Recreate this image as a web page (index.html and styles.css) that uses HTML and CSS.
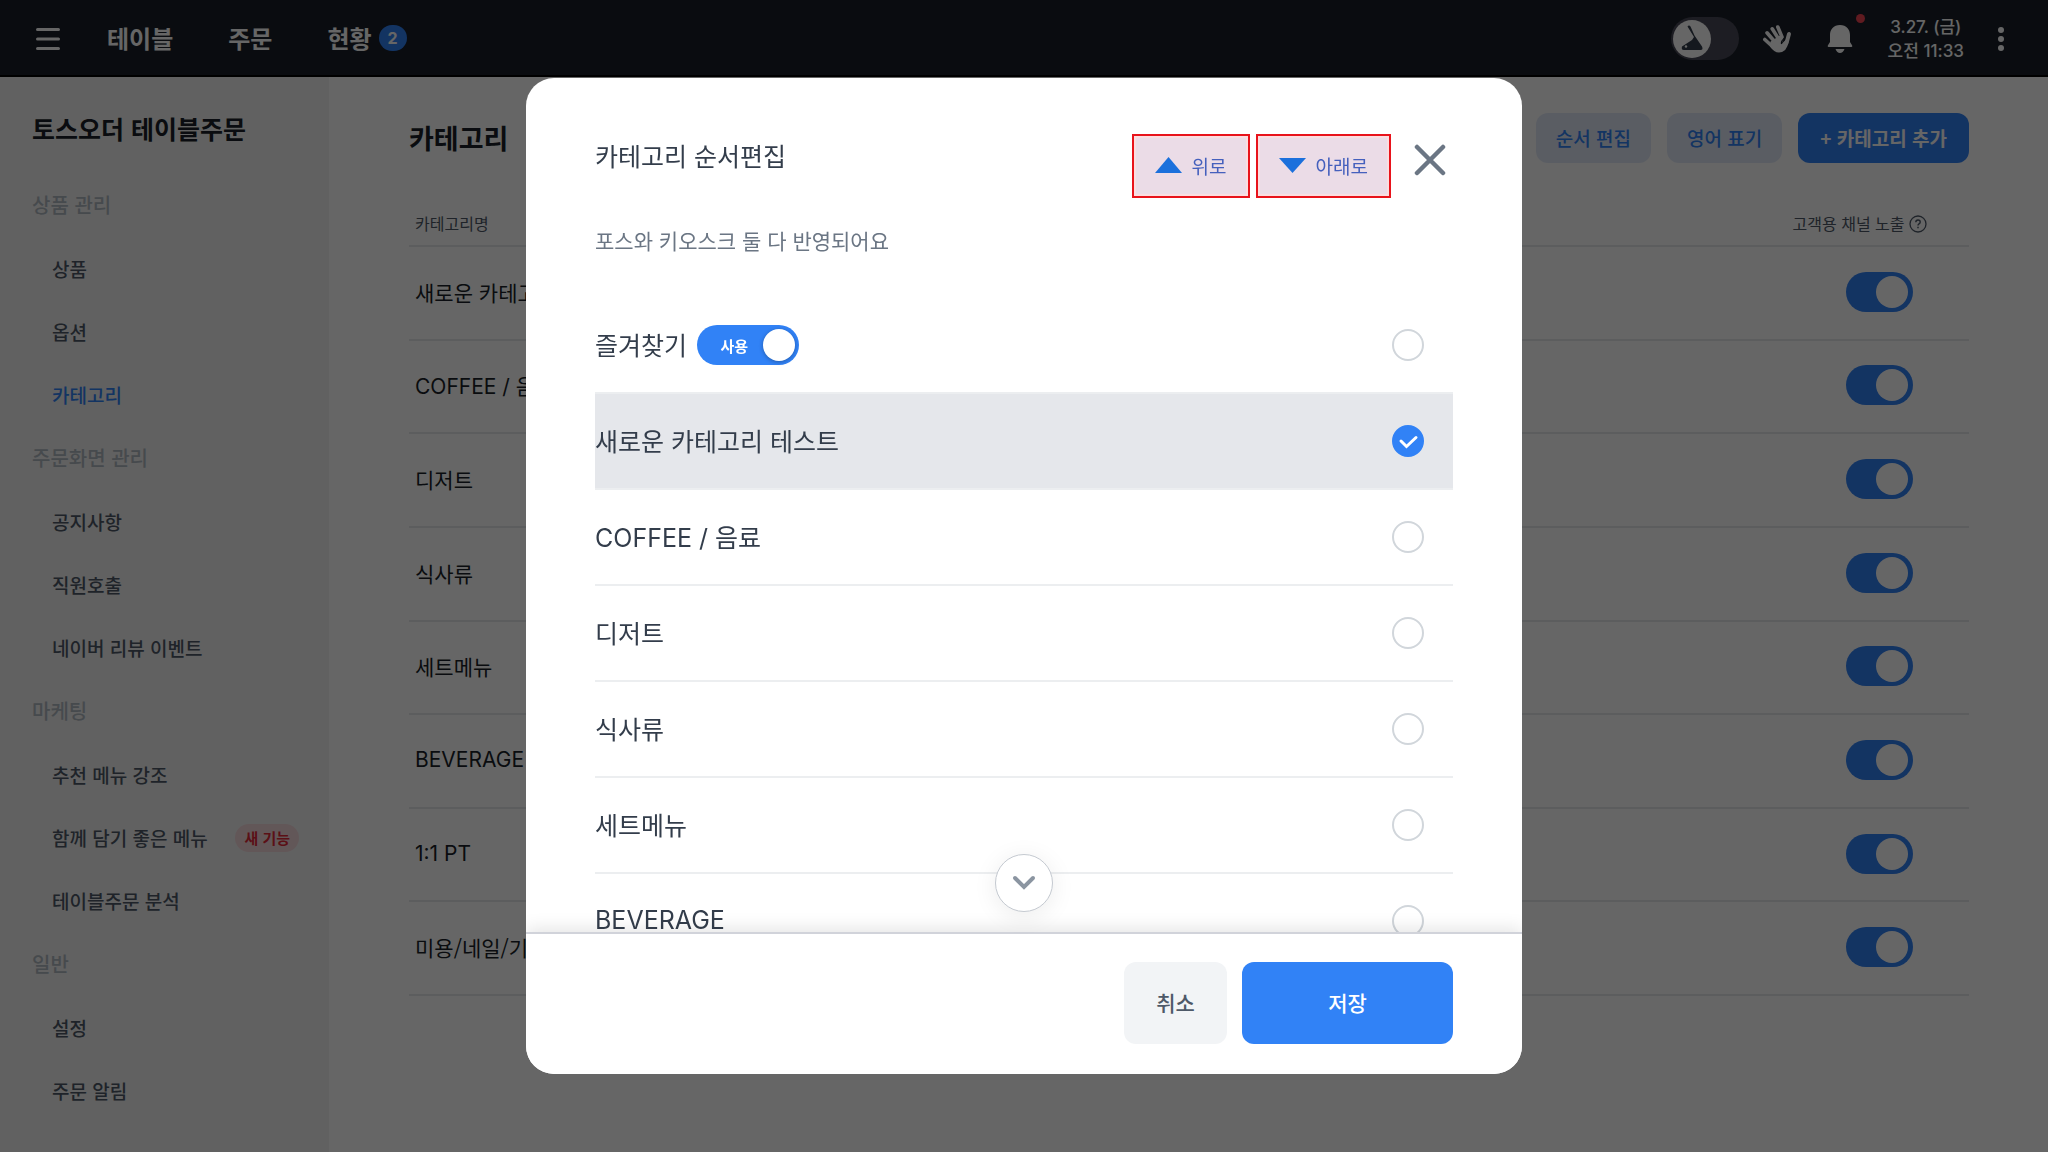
FILE: index.html
```
<!DOCTYPE html>
<html lang="ko">

<head>
    <meta charset="UTF-8">
    <meta name="viewport" content="width=device-width, initial-scale=1.0">
    <title>카테고리 - 토스오더 테이블주문</title>
    <link rel="stylesheet" href="styles.css">
</head>

<body>
    <header class="topbar">
        <button type="button" class="icon-btn menu-btn" aria-label="메뉴">
            <svg width="24" height="24" viewBox="0 0 24 24"><path d="M1.5 2.5h21M1.5 12h21M1.5 21.5h21" stroke="#fff" stroke-width="3" stroke-linecap="round"/></svg>
        </button>
        <nav class="top-nav">
            <a href="#">테이블</a>
            <a href="#">주문</a>
            <a href="#">현황 <span class="count latin">2</span></a>
        </nav>
        <div class="top-tools">
            <button type="button" class="mode-switch" aria-label="모드 전환">
                <span class="mode-knob">
                    <svg width="38" height="38" viewBox="0 0 38 38"><path d="M14.500 6.500q1.500-2 3 0l4 9 7.500 11q1.500 3.500-1.500 3.500H11q-3 0-2-3.500l10-6.500 2-3z" fill="#333d4b"/><circle cx="13" cy="26.500" r="1.200" fill="#fff"/></svg>
                </span>
            </button>
            <button type="button" class="icon-btn hand-btn" aria-label="직원호출">
                <svg width="30" height="30" viewBox="0 0 30 30"><g stroke="#fff" stroke-linecap="round" fill="none" stroke-width="3.600"><path d="M2.800 15.500L11 23M5 8.800L13 18M10.200 4.800L17 15.500M15.800 3L20 13"/><path d="M27 10L24.500 19" stroke-width="4"/></g><path d="M8.500 17.500L19 11l2.500 4.500-2.500 5 6.500-6.500 1 4q-1.500 10-9.500 10.500-5 0-9-6z" fill="#fff"/><path d="M19.500 20q-.5-4 3.500-5.500" stroke="#191f28" stroke-width="1.300" fill="none"/></svg>
            </button>
            <button type="button" class="icon-btn bell-btn" aria-label="알림">
                <svg width="26" height="30" viewBox="0 0 26 30"><path d="M13 1C6.500 1 3 5.500 3 11v7L.8 21.500q-.5 1.500 1 1.500h22.400q1.500 0 1-1.500L23 18v-7C23 5.500 19.500 1 13 1zM8.500 25h9q-1.500 4-4.500 4t-4.500-4z" fill="#fff"/></svg>
                <span class="dot"></span>
            </button>
            <div class="clock latin">3.27. (금)<br>오전 11:33</div>
            <button type="button" class="icon-btn more-btn" aria-label="더보기">
                <svg width="6" height="24" viewBox="0 0 6 24" fill="#fff"><circle cx="3" cy="3" r="3"/><circle cx="3" cy="12" r="3"/><circle cx="3" cy="21" r="3"/></svg>
            </button>
        </div>
    </header>

    <div class="page">
        <aside class="sidebar">
            <h2>토스오더 테이블주문</h2>
            <h3>상품 관리</h3>
            <a href="#">상품</a>
            <a href="#">옵션</a>
            <a href="#" class="active">카테고리</a>
            <h3>주문화면 관리</h3>
            <a href="#">공지사항</a>
            <a href="#">직원호출</a>
            <a href="#">네이버 리뷰 이벤트</a>
            <h3>마케팅</h3>
            <a href="#">추천 메뉴 강조</a>
            <a href="#">함께 담기 좋은 메뉴 <span class="new">새 기능</span></a>
            <a href="#">테이블주문 분석</a>
            <h3>일반</h3>
            <a href="#">설정</a>
            <a href="#">주문 알림</a>
        </aside>

        <main class="content">
            <div class="content-head">
                <h1>카테고리</h1>
                <button type="button" class="btn-soft">순서 편집</button>
                <button type="button" class="btn-soft">영어 표기</button>
                <button type="button" class="btn-add">+ 카테고리 추가</button>
            </div>
            <table class="category-table">
                <thead>
                    <tr>
                        <th>카테고리명</th>
                        <th class="channel">고객용 채널 노출 <svg class="help" width="18" height="18" viewBox="0 0 18 18" fill="none" stroke="#4e5968"><circle cx="9" cy="9" r="8" stroke-width="1.300"/><path d="M6.800 7.200q0-2.200 2.200-2.200t2.200 2q0 1.200-1.200 1.900-1 .6-1 1.600" stroke-width="1.400"/><path d="M9 11.800v1.500" stroke-width="1.500"/></svg></th>
                    </tr>
                </thead>
                <tbody>
                    <tr><td>새로운 카테고리 테스트</td><td><input type="checkbox" class="switch" aria-label="새로운 카테고리 테스트 노출" checked></td></tr>
                    <tr><td class="latin">COFFEE / 음료</td><td><input type="checkbox" class="switch" aria-label="COFFEE / 음료 노출" checked></td></tr>
                    <tr><td>디저트</td><td><input type="checkbox" class="switch" aria-label="디저트 노출" checked></td></tr>
                    <tr><td>식사류</td><td><input type="checkbox" class="switch" aria-label="식사류 노출" checked></td></tr>
                    <tr><td>세트메뉴</td><td><input type="checkbox" class="switch" aria-label="세트메뉴 노출" checked></td></tr>
                    <tr><td class="latin">BEVERAGE</td><td><input type="checkbox" class="switch" aria-label="BEVERAGE 노출" checked></td></tr>
                    <tr><td class="latin">1:1 PT</td><td><input type="checkbox" class="switch" aria-label="1:1 PT 노출" checked></td></tr>
                    <tr><td>미용/네일/기타</td><td><input type="checkbox" class="switch" aria-label="미용/네일/기타 노출" checked></td></tr>
                </tbody>
            </table>
        </main>
    </div>

    <div class="overlay">
        <div class="modal" role="dialog" aria-labelledby="modalTitle">
            <div class="modal-head">
                <h2 id="modalTitle">카테고리 순서편집</h2>
                <button type="button" class="move-btn">
                    <svg width="27" height="16" viewBox="0 0 27 16"><path d="M13.500 0L27 16H0z" fill="#1b70dc"/></svg>
                    위로
                </button>
                <button type="button" class="move-btn">
                    <svg width="27" height="16" viewBox="0 0 27 16"><path d="M13.500 16L27 1H0z" fill="#1b70dc"/></svg>
                    아래로
                </button>
                <button type="button" class="close-btn" aria-label="닫기">
                    <svg width="32" height="32" viewBox="0 0 32 32"><path d="M3 3l26 26M29 3L3 29" stroke="#6b7684" stroke-width="4.500" stroke-linecap="round"/></svg>
                </button>
            </div>
            <p class="modal-desc">포스와 키오스크 둘 다 반영되어요</p>

            <div class="order-list">
                <div class="order-row">
                    <label for="cat0">즐겨찾기</label>
                    <label class="use-switch"><input type="checkbox" checked><span>사용</span></label>
                    <input type="radio" name="cat" id="cat0">
                </div>
                <div class="order-row selected">
                    <label for="cat1">새로운 카테고리 테스트</label>
                    <input type="radio" name="cat" id="cat1" checked>
                </div>
                <div class="order-row latin">
                    <label for="cat2">COFFEE / 음료</label>
                    <input type="radio" name="cat" id="cat2">
                </div>
                <div class="order-row">
                    <label for="cat3">디저트</label>
                    <input type="radio" name="cat" id="cat3">
                </div>
                <div class="order-row">
                    <label for="cat4">식사류</label>
                    <input type="radio" name="cat" id="cat4">
                </div>
                <div class="order-row">
                    <label for="cat5">세트메뉴</label>
                    <input type="radio" name="cat" id="cat5">
                </div>
                <div class="order-row latin">
                    <label for="cat6">BEVERAGE</label>
                    <input type="radio" name="cat" id="cat6">
                </div>
            </div>

            <div class="modal-foot">
                <button type="button" class="scroll-btn" aria-label="아래로 스크롤">
                    <svg width="24" height="16" viewBox="0 0 24 16"><path d="M3 3l9 9 9-9" fill="none" stroke="#8b95a1" stroke-width="4" stroke-linecap="round"/></svg>
                </button>
                <button type="button" class="btn-cancel">취소</button>
                <button type="button" class="btn-save">저장</button>
            </div>
        </div>
    </div>
</body>

</html>
```
FILE: styles.css
```
* {
    box-sizing: border-box;
}

body {
    margin: 0;
    font-family: "Noto Sans CJK KR", sans-serif;
    color: #191f28;
    background-color: #fff;
    height: 100vh;
    overflow: hidden;
    display: flex;
    flex-direction: column;
}

h1, h2, h3, p {
    margin: 0;
}

a {
    color: inherit;
    text-decoration: none;
}

button {
    font-family: inherit;
    border: none;
    padding: 0;
    cursor: pointer;
}

svg {
    display: block;
}

.latin {
    font-family: Inter, "Noto Sans CJK KR", sans-serif;
}

/* top bar */
.topbar {
    display: flex;
    align-items: center;
    height: 77px;
    padding: 0 44px 0 36px;
    background-color: #191f28;
    box-shadow: inset 0 -2px 0 #000;
    color: #fff;
}

.icon-btn {
    background: none;
    position: relative;
}

.top-nav {
    display: flex;
    gap: 55px;
    margin-left: 47px;
    padding-bottom: 2px;
    font-size: 24px;
    font-weight: 700;
}

.top-nav a {
    display: flex;
    align-items: center;
    gap: 7px;
    line-height: 34px;
}

.count {
    width: 28px;
    height: 26px;
    border-radius: 13px;
    background-color: #3182f6;
    font-size: 16px;
    font-weight: 700;
    line-height: 26px;
    text-align: center;
}

.top-tools {
    display: flex;
    align-items: center;
    margin-left: auto;
}

.mode-switch {
    width: 68px;
    height: 43px;
    padding: 2px;
    border-radius: 22px;
    background-color: #4a4a58;
}

.mode-knob {
    display: block;
    width: 38px;
    height: 38px;
    border-radius: 50%;
    background-color: #fff;
}

.hand-btn {
    margin-left: 23px;
}

.bell-btn {
    margin-left: 35px;
}

.dot {
    position: absolute;
    top: -10px;
    right: -12px;
    width: 9px;
    height: 9px;
    border-radius: 50%;
    background-color: #f04452;
}

.clock {
    margin: 0 34px 0 35px;
    font-size: 17px;
    font-weight: 500;
    line-height: 24px;
    text-align: center;
}

/* sidebar */
.page {
    display: flex;
    flex: 1;
}

.sidebar {
    flex: none;
    width: 329px;
    padding: 28px 30px 28px 32px;
    background-color: #f3f3f3;
}

.sidebar h2 {
    height: 68px;
    font-size: 25px;
    font-weight: 700;
    line-height: 46px;
    white-space: nowrap;
}

.sidebar h3 {
    font-size: 20px;
    font-weight: 500;
    line-height: 64px;
    color: #b0b8c1;
}

.sidebar a {
    display: flex;
    align-items: center;
    justify-content: space-between;
    height: 63px;
    padding-left: 20px;
    font-size: 19px;
    font-weight: 500;
    color: #4e5968;
    white-space: nowrap;
}

.sidebar .active {
    color: #3182f6;
}

.new {
    padding: 0 9px;
    border-radius: 14px;
    background-color: #f5d9dc;
    color: #e42939;
    font-size: 15px;
    font-weight: 700;
    line-height: 28px;
}

/* category table */
.content {
    flex: 1;
    padding: 36px 79px 0 80px;
}

.content-head {
    display: flex;
    align-items: center;
    gap: 16px;
}

.content-head h1 {
    margin-right: auto;
    font-size: 27px;
    font-weight: 700;
    line-height: 50px;
}

.btn-soft,
.btn-add {
    height: 50px;
    padding: 0 20px 2px;
    border-radius: 12px;
    font-size: 19px;
    font-weight: 500;
}

.btn-soft {
    background-color: #e2e9f8;
    color: #3182f6;
}

.btn-add {
    padding: 0 22px 2px;
    background-color: #3182f6;
    color: #fff;
    font-weight: 700;
}

.category-table {
    width: 100%;
    height: 794px;
    margin-top: 39px;
    border-collapse: collapse;
}

.category-table th {
    height: 44px;
    padding: 0 6px 2px;
    border-bottom: 2px solid #e5e8eb;
    font-size: 16px;
    font-weight: 400;
    color: #4e5968;
    text-align: left;
}

.category-table .channel {
    padding-right: 42px;
    text-align: right;
}

.help {
    display: inline-block;
    vertical-align: -3px;
}

.category-table td {
    padding: 0 6px 2px;
    border-bottom: 2px solid #e5e8eb;
    font-size: 21px;
}

.category-table td:last-child {
    padding-right: 56px;
    text-align: right;
}

.switch {
    appearance: none;
    display: inline-block;
    width: 67px;
    height: 40px;
    margin: 0;
    padding: 4px 5px;
    border-radius: 20px;
    background-color: #b0b8c1;
    vertical-align: middle;
}

.switch::before {
    content: "";
    display: block;
    width: 32px;
    height: 32px;
    border-radius: 50%;
    background-color: #fff;
}

.switch:checked {
    background-color: #3182f6;
}

.switch:checked::before {
    margin-left: auto;
}

/* modal */
.overlay {
    position: fixed;
    inset: 0;
    display: flex;
    align-items: center;
    justify-content: center;
    background-color: rgba(0, 0, 0, 0.6);
}

.modal {
    display: flex;
    flex-direction: column;
    width: 996px;
    max-width: 100%;
    height: calc(100vh - 156px);
    border-radius: 28px;
    background-color: #fff;
    overflow: hidden;
}

.modal-head {
    display: flex;
    align-items: flex-start;
    gap: 6px;
    padding: 56px 69px 0;
}

.modal-head h2 {
    margin-right: auto;
    font-size: 25px;
    font-weight: 400;
    line-height: 42px;
    color: #333d4b;
}

.move-btn {
    display: flex;
    align-items: center;
    gap: 10px;
    height: 64px;
    padding: 0 21px 2px;
    border: 2px solid #e8131b;
    background-color: #ebdce7;
    box-shadow: inset 0 0 0 2px #fbdde0;
    color: #4560bd;
    font-size: 19px;
}

.close-btn {
    margin-left: 10px;
    padding: 10px 7px;
    background: none;
}

.modal-desc {
    padding: 22px 69px 38px;
    font-size: 21px;
    line-height: 40px;
    color: #6b7684;
}

.order-list {
    flex: 1;
    min-height: 0;
    overflow: hidden;
    padding: 0 69px;
}

.order-row {
    display: flex;
    align-items: center;
    height: 96px;
    padding-right: 29px;
    border-bottom: 2px solid #eceef0;
    font-size: 25px;
    color: #333d4b;
}

.order-row > label {
    padding-bottom: 2px;
}

.order-row.selected {
    background-color: #e5e7eb;
}

.order-row input[type="radio"] {
    appearance: none;
    width: 32px;
    height: 32px;
    margin: 0 0 0 auto;
    border: 2px solid #d1d6db;
    border-radius: 50%;
    background-color: #fff;
}

.order-row input[type="radio"]:checked {
    border-color: #3182f6;
    background: #3182f6 url("data:image/svg+xml,%3Csvg xmlns='http://www.w3.org/2000/svg' viewBox='0 0 28 28'%3E%3Cpath d='M7 14l5.500 5.500L22 10.500' fill='none' stroke='white' stroke-width='3' stroke-linecap='round'/%3E%3C/svg%3E") center / 28px no-repeat;
}

.order-row .use-switch {
    display: flex;
    flex-direction: row-reverse;
    align-items: center;
    gap: 15px;
    width: 102px;
    height: 40px;
    margin-left: 10px;
    padding: 0 4px;
    border-radius: 20px;
    background-color: #3182f6;
    color: #fff;
    font-size: 15px;
    font-weight: 700;
}

.use-switch input {
    appearance: none;
    width: 32px;
    height: 32px;
    margin: 0;
    border-radius: 50%;
    background-color: #fff;
    box-shadow: 0 1px 4px rgba(0, 0, 0, 0.3);
}

.modal-foot {
    position: relative;
    display: flex;
    justify-content: flex-end;
    gap: 15px;
    padding: 28px 69px 30px;
    border-top: 2px solid #d1d3da;
    background-color: #fff;
    box-shadow: 0 -4px 16px rgba(0, 0, 0, 0.1);
}

/* floats over the list, just above the footer */
.scroll-btn {
    position: absolute;
    bottom: 100%;
    left: 50%;
    display: flex;
    align-items: center;
    justify-content: center;
    width: 58px;
    height: 58px;
    margin: 0 0 22px -29px;
    border: 1px solid #c4c9d0;
    border-radius: 50%;
    background-color: #fff;
    box-shadow: 0 4px 24px rgba(0, 0, 0, 0.08);
}

.btn-cancel,
.btn-save {
    height: 82px;
    padding-bottom: 2px;
    border-radius: 12px;
    font-size: 21px;
    font-weight: 500;
}

.btn-cancel {
    width: 103px;
    background-color: #f2f4f6;
    color: #4e5968;
}

.btn-save {
    width: 211px;
    background-color: #3182f6;
    color: #fff;
}
```
